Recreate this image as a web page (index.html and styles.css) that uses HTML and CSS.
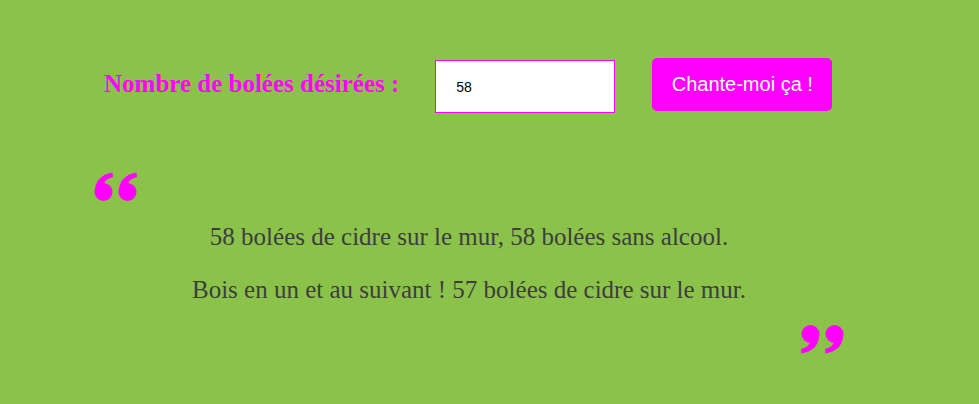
FILE: index.html
```html
<!DOCTYPE html>
<html lang="fr">
<head>
<meta charset="utf-8">
<link rel="stylesheet" href="styles.css">
</head>
<body>
<main class="wrap">
  <form class="row">
    <label class="label" for="n">Nombre de bolées désirées :</label>
    <input class="field" id="n" type="text" value="58">
    <button class="btn" type="button">Chante-moi ça !</button>
  </form>
  <section class="quote">
    <svg class="q q-open" width="44" height="31" viewBox="0 0 44 31" aria-hidden="true">
      <g fill="#f0f">
        <circle cx="9.5" cy="21" r="9"/>
        <path d="M0.8 21 C0.8 10 7 3.5 18.5 1.5 L19 6 C12 7.5 9 12 9 18 Z"/>
        <circle cx="33.5" cy="21" r="9"/>
        <path d="M24.8 21 C24.8 10 31 3.5 42.5 1.5 L43 6 C36 7.5 33 12 33 18 Z"/>
      </g>
    </svg>
    <p class="line first">58 bolées de cidre sur le mur, 58 bolées sans alcool.</p>
    <p class="line">Bois en un et au suivant ! 57 bolées de cidre sur le mur.</p>
    <svg class="q q-close" width="44" height="31" viewBox="0 0 44 31" aria-hidden="true">
      <g fill="#f0f" transform="rotate(180 22 15.5)">
        <circle cx="9.5" cy="21" r="9"/>
        <path d="M0.8 21 C0.8 10 7 3.5 18.5 1.5 L19 6 C12 7.5 9 12 9 18 Z"/>
        <circle cx="33.5" cy="21" r="9"/>
        <path d="M24.8 21 C24.8 10 31 3.5 42.5 1.5 L43 6 C36 7.5 33 12 33 18 Z"/>
      </g>
    </svg>
  </section>
</main>
</body>
</html>
```
FILE: styles.css
```css
html, body {
  margin: 0;
  padding: 0;
  background: #8bc34a;
  height: 100%;
}
body {
  font-family: "Liberation Serif", "Times New Roman", serif;
}
.wrap {
  width: 750px;
  margin-left: 94px;
  padding-top: 56px;
}
.row {
  display: flex;
  align-items: center;
  margin: 0;
  padding-left: 10px;
}
.label {
  color: #f0f;
  font-weight: bold;
  font-size: 25px;
  margin-right: 36px;
  margin-top: -2px;
}
.field {
  box-sizing: border-box;
  width: 180px;
  height: 53px;
  margin-top: 4px;
  border: 1px solid #f0f;
  background: #fff;
  padding: 0 0 0 20px;
  font-family: "Liberation Sans", Arial, sans-serif;
  font-size: 14px;
  color: #000;
  outline: none;
}
.btn {
  margin-left: 37px;
  width: 180px;
  height: 53px;
  border: none;
  border-radius: 5px;
  background: #f0f;
  color: #fff;
  font-family: "Liberation Sans", Arial, sans-serif;
  font-size: 20px;
  padding: 0;
}
.quote {
  margin-top: 58px;
  display: flex;
  flex-direction: column;
  color: #3d3d3d;
}
.q {
  display: block;
}
.q-open {
  align-self: flex-start;
}
.q-close {
  align-self: flex-end;
  margin-top: 8px;
}
.line {
  margin: 0;
  text-align: center;
  font-size: 25px;
  line-height: 53px;
}
.line.first {
  margin-top: 8px;
}
```
